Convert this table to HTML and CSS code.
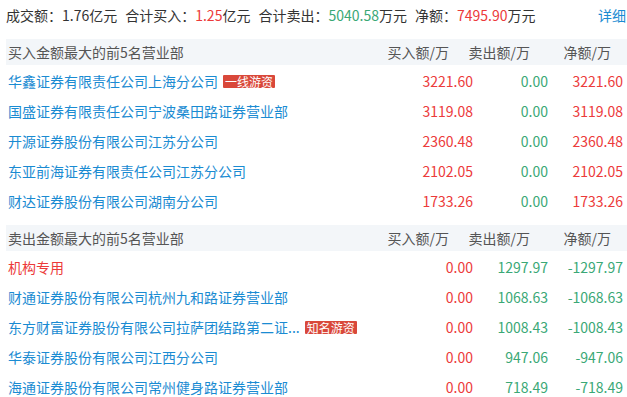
FILE: index.html
```html
<!DOCTYPE html>
<html lang="zh-CN">
<head>
<meta charset="utf-8">
<link rel="stylesheet" href="styles.css">
</head>
<body>
<div class="page">
  <div class="summary">
    <div class="stats">
      <span class="stat">成交额：<span class="plain">1.76</span>亿元</span>
      <span class="stat">合计买入：<span class="up">1.25</span>亿元</span>
      <span class="stat">合计卖出：<span class="down">5040.58</span>万元</span>
      <span class="stat">净额：<span class="up">7495.90</span>万元</span>
    </div>
    <a class="more">详细</a>
  </div>

  <div class="section">
    <div class="row head">
      <div class="name">买入金额最大的前5名营业部</div>
      <div class="num buy">买入额/万</div>
      <div class="num sell">卖出额/万</div>
      <div class="num net">净额/万</div>
    </div>
    <div class="row">
      <div class="name"><span class="link">华鑫证券有限责任公司上海分公司</span><span class="tag">一线游资</span></div>
      <div class="num buy up">3221.60</div>
      <div class="num sell down">0.00</div>
      <div class="num net up">3221.60</div>
    </div>
    <div class="row">
      <div class="name"><span class="link">国盛证券有限责任公司宁波桑田路证券营业部</span></div>
      <div class="num buy up">3119.08</div>
      <div class="num sell down">0.00</div>
      <div class="num net up">3119.08</div>
    </div>
    <div class="row">
      <div class="name"><span class="link">开源证券股份有限公司江苏分公司</span></div>
      <div class="num buy up">2360.48</div>
      <div class="num sell down">0.00</div>
      <div class="num net up">2360.48</div>
    </div>
    <div class="row">
      <div class="name"><span class="link">东亚前海证券有限责任公司江苏分公司</span></div>
      <div class="num buy up">2102.05</div>
      <div class="num sell down">0.00</div>
      <div class="num net up">2102.05</div>
    </div>
    <div class="row">
      <div class="name"><span class="link">财达证券股份有限公司湖南分公司</span></div>
      <div class="num buy up">1733.26</div>
      <div class="num sell down">0.00</div>
      <div class="num net up">1733.26</div>
    </div>
  </div>

  <div class="section second">
    <div class="row head">
      <div class="name">卖出金额最大的前5名营业部</div>
      <div class="num buy">买入额/万</div>
      <div class="num sell">卖出额/万</div>
      <div class="num net">净额/万</div>
    </div>
    <div class="row">
      <div class="name"><span class="inst">机构专用</span></div>
      <div class="num buy up">0.00</div>
      <div class="num sell down">1297.97</div>
      <div class="num net down">-1297.97</div>
    </div>
    <div class="row">
      <div class="name"><span class="link">财通证券股份有限公司杭州九和路证券营业部</span></div>
      <div class="num buy up">0.00</div>
      <div class="num sell down">1068.63</div>
      <div class="num net down">-1068.63</div>
    </div>
    <div class="row">
      <div class="name"><span class="link">东方财富证券股份有限公司拉萨团结路第二证...</span><span class="tag">知名游资</span></div>
      <div class="num buy up">0.00</div>
      <div class="num sell down">1008.43</div>
      <div class="num net down">-1008.43</div>
    </div>
    <div class="row">
      <div class="name"><span class="link">华泰证券股份有限公司江西分公司</span></div>
      <div class="num buy up">0.00</div>
      <div class="num sell down">947.06</div>
      <div class="num net down">-947.06</div>
    </div>
    <div class="row">
      <div class="name"><span class="link">海通证券股份有限公司常州健身路证券营业部</span></div>
      <div class="num buy up">0.00</div>
      <div class="num sell down">718.49</div>
      <div class="num net down">-718.49</div>
    </div>
  </div>
</div>
</body>
</html>
```

FILE: styles.css
```css
html, body {
  margin: 0;
  padding: 0;
  background: #ffffff;
}

body {
  font-family: "Noto Sans CJK SC", "Noto Sans", sans-serif;
  font-size: 14px;
  color: #333333;
}

.page {
  padding-left: 6px;
}

.summary {
  display: flex;
  align-items: center;
  justify-content: space-between;
  height: 30px;
  line-height: 30px;
  padding-right: 1px;
}

.stats {
  display: flex;
  gap: 8px;
}

.more {
  color: #1a8bd2;
  cursor: pointer;
}

.section {
  margin-top: 9px;
}

.section.second {
  margin-top: 9px;
}

.row {
  display: flex;
  align-items: center;
  height: 30px;
}

.row.head {
  height: 26px;
  background: #f3f6f9;
  color: #555555;
  margin-bottom: 1px;
}

.name {
  flex: 1;
  padding-left: 2px;
  display: flex;
  align-items: center;
  white-space: nowrap;
}

.num {
  text-align: right;
  white-space: nowrap;
}

.buy {
  width: 90px;
  padding-right: 150px;
}

.row .buy { width: 80px; padding-right: 0; }
.row .sell { width: 75px; }
.row .net { width: 75px; padding-right: 4px; }

.row.head .buy { width: 75px; padding-right: 6px; }
.row.head .sell { width: 75px; padding-right: 6px; }
.row.head .net { width: 75px; padding-right: 16px; }

.link {
  color: #1a8bd2;
}

.inst {
  color: #ec3a3a;
}

.up {
  color: #ec3a3a;
}

.down {
  color: #3aa876;
}

.plain {
  color: #333333;
}

.tag {
  margin-left: 5px;
  background: #d9483a;
  color: #ffffff;
  font-size: 12px;
  line-height: 13px;
  padding: 0 2px;
  border-radius: 1px;
}
```
